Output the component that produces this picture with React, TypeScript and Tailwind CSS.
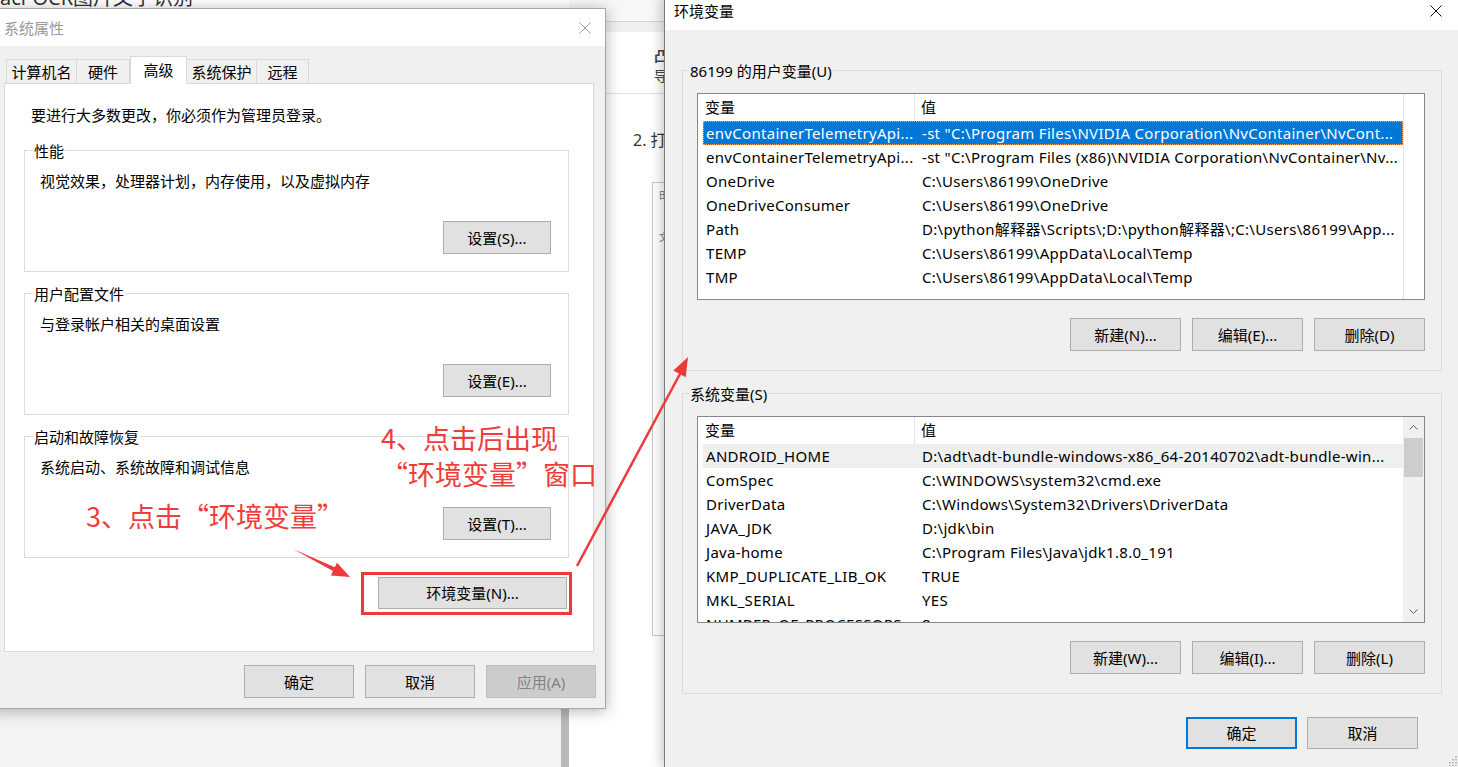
import React from 'react';

type Row = [string, string];

const userRows: Row[] = [
  ['envContainerTelemetryApi...', '-st "C:\\Program Files\\NVIDIA Corporation\\NvContainer\\NvCont...'],
  ['envContainerTelemetryApi...', '-st "C:\\Program Files (x86)\\NVIDIA Corporation\\NvContainer\\Nv...'],
  ['OneDrive', 'C:\\Users\\86199\\OneDrive'],
  ['OneDriveConsumer', 'C:\\Users\\86199\\OneDrive'],
  ['Path', 'D:\\python解释器\\Scripts\\;D:\\python解释器\\;C:\\Users\\86199\\App...'],
  ['TEMP', 'C:\\Users\\86199\\AppData\\Local\\Temp'],
  ['TMP', 'C:\\Users\\86199\\AppData\\Local\\Temp'],
];

const systemRows: Row[] = [
  ['ANDROID_HOME', 'D:\\adt\\adt-bundle-windows-x86_64-20140702\\adt-bundle-win...'],
  ['ComSpec', 'C:\\WINDOWS\\system32\\cmd.exe'],
  ['DriverData', 'C:\\Windows\\System32\\Drivers\\DriverData'],
  ['JAVA_JDK', 'D:\\jdk\\bin'],
  ['Java-home', 'C:\\Program Files\\Java\\jdk1.8.0_191'],
  ['KMP_DUPLICATE_LIB_OK', 'TRUE'],
  ['MKL_SERIAL', 'YES'],
  ['NUMBER_OF_PROCESSORS', '8'],
];

const CloseIcon = ({ color }: { color: string }) => (
  <svg width="12" height="12" viewBox="0 0 12 12">
    <path d="M0.5 0.5 L11.5 11.5 M11.5 0.5 L0.5 11.5" stroke={color} strokeWidth="1" fill="none" />
  </svg>
);

interface BtnProps {
  children: React.ReactNode;
  className?: string;
  variant?: 'normal' | 'default' | 'disabled';
}

const Btn: React.FC<BtnProps> = ({ children, className = '', variant = 'normal' }) => {
  const look =
    variant === 'disabled'
      ? 'bg-[#cccccc] border border-[#bfbfbf] text-[#838383]'
      : variant === 'default'
      ? 'bg-[#e1e1e1] border-2 border-[#0078d7] text-black'
      : 'bg-[#e1e1e1] border border-[#adadad] text-black';
  return (
    <div className={`flex shrink-0 items-center justify-center whitespace-nowrap leading-[20px] ${look} ${className}`}>
      {children}
    </div>
  );
};

interface SettingGroupProps {
  title: string;
  desc: string;
  button: string;
  className?: string;
}

const SettingGroup: React.FC<SettingGroupProps> = ({ title, desc, button, className = '' }) => (
  <div className={`relative h-[122px] border border-[#dcdcdc] pl-[15px] pr-[17px] pt-[20px] ${className}`}>
    <span className="absolute left-[8px] top-[-10px] bg-white px-[1px] leading-[20px]">{title}</span>
    <p className="leading-[20px]">{desc}</p>
    <div className="mt-[30px] flex justify-end">
      <Btn className="h-[33px] w-[108px]">{button}</Btn>
    </div>
  </div>
);

const tabs = [
  { label: '计算机名', w: 'w-[71px]' },
  { label: '硬件', w: 'w-[53px]' },
  { label: '高级', w: 'w-[57px]', active: true },
  { label: '系统保护', w: 'w-[70px]' },
  { label: '远程', w: 'w-[52px]' },
];

function SystemProperties() {
  return (
    <div className="absolute left-[-8px] top-[8px] z-10 flex h-[701px] w-[614px] flex-col border border-[#a6a6a6] bg-[#f0f0f0] shadow-[0_2px_14px_rgba(0,0,0,0.3)]">
      {/* title bar (inactive) */}
      <div className="flex h-[37px] items-center justify-between bg-white pl-[11px] pr-[14px]">
        <span className="text-[#999] leading-[20px]">系统属性</span>
        <CloseIcon color="#9a9a9a" />
      </div>

      <div className="px-[11px] pt-[10px]">
        {/* tabs */}
        <div className="flex items-end pl-[2px]">
          {tabs.map((t, i) =>
            t.active ? (
              <div
                key={t.label}
                className={`relative z-10 -mb-px flex h-[28px] ${t.w} items-start justify-center border border-b-0 border-[#d9d9d9] bg-white pt-[3px] leading-[20px]`}
              >
                {t.label}
              </div>
            ) : (
              <div
                key={t.label}
                className={`flex h-[24px] ${t.w} items-center justify-center border-t border-r border-[#d9d9d9] bg-[#f0f0f0] leading-[20px] ${i === 0 ? 'border-l' : ''}`}
              >
                {t.label}
              </div>
            )
          )}
        </div>

        {/* tab panel */}
        <div className="h-[569px] border border-[#d9d9d9] bg-white pl-[19px] pr-[24px] pt-[21px]">
          <p className="pl-[7px] leading-[20px]">要进行大多数更改，你必须作为管理员登录。</p>
          <SettingGroup className="mt-[25px]" title="性能" desc="视觉效果，处理器计划，内存使用，以及虚拟内存" button="设置(S)..." />
          <SettingGroup className="mt-[21px]" title="用户配置文件" desc="与登录帐户相关的桌面设置" button="设置(E)..." />
          <SettingGroup className="mt-[21px]" title="启动和故障恢复" desc="系统启动、系统故障和调试信息" button="设置(T)..." />
          <div className="mt-[19px] flex justify-end pr-[2px]">
            <Btn className="h-[32px] w-[189px]">环境变量(N)...</Btn>
          </div>
        </div>

        <div className="-mr-[2px] mt-[13px] flex justify-end gap-[11px]">
          <Btn className="h-[33px] w-[110px]">确定</Btn>
          <Btn className="h-[33px] w-[110px]">取消</Btn>
          <Btn className="h-[33px] w-[110px]" variant="disabled">应用(A)</Btn>
        </div>
      </div>
    </div>
  );
}

const Chevron = ({ up }: { up?: boolean }) => (
  <svg width="9" height="5" viewBox="0 0 9 5">
    <polyline
      points={up ? '0.5,4.5 4.5,0.5 8.5,4.5' : '0.5,0.5 4.5,4.5 8.5,0.5'}
      fill="none"
      stroke="#606060"
      strokeWidth="1"
    />
  </svg>
);

interface VarListProps {
  rows: Row[];
  selected?: number;
  hover?: number;
  scrollbar?: boolean;
}

const VarList: React.FC<VarListProps> = ({ rows, selected, hover, scrollbar }) => (
  <div className="flex h-[207px] w-[728px] overflow-hidden border border-[#828790] bg-white">
    <div className="flex w-[705px] flex-col overflow-hidden">
      <div className="flex h-[27px] shrink-0 items-center">
        <div className="flex h-full w-[217px] items-center border-r border-[#e5e5e5] pl-[7px]">变量</div>
        <div className="pl-[6px]">值</div>
      </div>
      <div className="pl-[5px] tracking-[0.3px]">
        {rows.map(([name, value], i) => {
          const state =
            i === selected
              ? 'bg-[#0078d7] text-white outline-1 outline-dotted -outline-offset-1 outline-[#f5a35c]'
              : i === hover
              ? 'bg-[#efefef]'
              : '';
          return (
            <div key={i} className={`flex h-[24px] w-[700px] shrink-0 items-center whitespace-nowrap ${state}`}>
              <div className="w-[216px] shrink-0 overflow-hidden pl-[3px]">{name}</div>
              <div className="flex-1 overflow-hidden pl-[3px]">{value}</div>
            </div>
          );
        })}
      </div>
    </div>
    {scrollbar ? (
      <div className="flex w-[21px] flex-col bg-[#f0f0f0]">
        <div className="flex h-[21px] items-center justify-center">
          <Chevron up />
        </div>
        <div className="mx-[1px] h-[39px] bg-[#cdcdcd]" />
        <div className="flex-1" />
        <div className="flex h-[21px] items-center justify-center">
          <Chevron />
        </div>
      </div>
    ) : (
      <div className="w-[21px] border-l border-[#e3e3e3]" />
    )}
  </div>
);

interface VarGroupProps {
  title: string;
  children: React.ReactNode;
  buttons: string[];
  className?: string;
}

const VarGroup: React.FC<VarGroupProps> = ({ title, children, buttons, className = '' }) => (
  <div className={`relative h-[301px] border border-[#dcdcdc] pl-[14px] pt-[22px] ${className}`}>
    <span className="absolute left-[6px] top-[-10px] bg-[#f0f0f0] px-[1px] leading-[20px]">{title}</span>
    {children}
    <div className="mt-[18px] flex w-[728px] justify-end gap-[11px]">
      {buttons.map((b) => (
        <Btn key={b} className="h-[33px] w-[111px]">
          {b}
        </Btn>
      ))}
    </div>
  </div>
);

function EnvVariables() {
  return (
    <div className="absolute left-[664px] top-[-8px] z-10 flex h-[775px] w-[795px] flex-col border-l border-[#7a7a7a] bg-[#f0f0f0] shadow-[0_2px_14px_rgba(0,0,0,0.3)]">
      <div className="flex h-[38px] shrink-0 items-center justify-between bg-white pl-[9px] pr-[17px]">
        <span className="leading-[20px]">环境变量</span>
        <CloseIcon color="#111" />
      </div>

      <div className="px-[17px]">
        <VarGroup className="mt-[40px]" title="86199 的用户变量(U)" buttons={['新建(N)...', '编辑(E)...', '删除(D)']}>
          <VarList rows={userRows} selected={0} />
        </VarGroup>
        <VarGroup className="mt-[22px]" title="系统变量(S)" buttons={['新建(W)...', '编辑(I)...', '删除(L)']}>
          <VarList rows={systemRows} hover={0} scrollbar />
        </VarGroup>

        <div className="mt-[23px] flex justify-end gap-[10px] pr-[24px]">
          <Btn className="h-[32px] w-[111px]" variant="default">确定</Btn>
          <Btn className="h-[32px] w-[111px]">取消</Btn>
        </div>
      </div>

      {/* size grip */}
      <svg className="absolute bottom-[1px] right-[2px]" width="10" height="10" viewBox="0 0 10 10">
        {[
          [8, 0], [8, 3], [5, 3], [8, 6], [5, 6], [2, 6], [8, 9], [5, 9], [2, 9],
        ].map(([x, y], i) => (
          <rect key={i} x={x} y={y} width="2" height="1.5" fill="#b5b5b5" />
        ))}
      </svg>
    </div>
  );
}

function Backdrop() {
  return (
    <div className="flex h-full">
      <div className="flex w-[561px] flex-col">
        <div className="h-[100px] bg-white">
          <div className="-mt-[17px] whitespace-nowrap text-[20px] leading-[30px] text-[#333]">aci-OCR图片文字识别</div>
        </div>
        <div className="flex-1 bg-[#f3f3f3]" />
      </div>
      <div className="flex w-[8px] flex-col">
        <div className="h-[100px] bg-white" />
        <div className="flex-1 bg-[#b9b9b9]" />
      </div>
      <div className="flex w-[96px] flex-col bg-white">
        <div className="h-[22px] border-b border-[#d4d4d4] bg-[#f7f7f7]" />
        <div className="h-[10px] bg-[#f0f0f0]" />
        <div className="flex h-[62px] border-b border-[#e3e3e3]">
          <div className="ml-[54px] mt-[20px] h-[20px] w-px bg-[#d8d8d8]" />
          <div className="ml-[31px] flex flex-col pt-[14px] text-[14px] leading-[20px] text-[#444]">
            <span className="font-bold">凸</span>
            <span>导</span>
          </div>
        </div>
        <div className="ml-[64px] mt-[37px] whitespace-nowrap text-[16px] leading-[18px] text-[#333]">2. 打开</div>
        <div className="ml-[83px] mt-[33px] flex h-[454px] flex-col gap-[30px] border border-[#c8c8c8] pl-[6px] pt-[6px] text-[10px] leading-[12px] text-[#777]">
          <span>田</span>
          <span>文</span>
        </div>
      </div>
    </div>
  );
}

function Annotations() {
  return (
    <>
      <div className="absolute left-[381px] top-[420px] z-20 whitespace-nowrap font-['Noto_Sans_CJK_SC',sans-serif] text-[27px] leading-[36px] text-[#f23b3b]">
        <div>4、点击后出现</div>
        <div>“环境变量”窗口</div>
      </div>
      <div className="absolute left-[86px] top-[498px] z-20 whitespace-nowrap font-['Noto_Sans_CJK_SC',sans-serif] text-[27px] leading-[36px] text-[#f23b3b]">
        3、点击“环境变量”
      </div>
      <div className="absolute left-[361px] top-[572px] z-20 h-[43px] w-[211px] border-[3px] border-[#ee3a3a]" />
      <svg className="pointer-events-none absolute inset-0 z-20" width="1458" height="767" viewBox="0 0 1458 767">
        <polygon points="293,549 334.8,567.3 337,562.8 350,577 330.8,575.4 333,570.9" fill="#ee3a3a" />
        <line x1="577" y1="566" x2="681" y2="372" stroke="#ee3a3a" strokeWidth="2.5" />
        <polygon points="688,357 685.7,377.2 673.3,370.6" fill="#ee3a3a" />
      </svg>
    </>
  );
}

export default function App() {
  return (
    <div className="relative h-[767px] w-[1458px] overflow-hidden bg-white font-['Noto_Sans','Noto_Sans_CJK_SC',sans-serif] text-[15px] text-black">
      <Backdrop />
      <SystemProperties />
      <EnvVariables />
      <Annotations />
    </div>
  );
}
